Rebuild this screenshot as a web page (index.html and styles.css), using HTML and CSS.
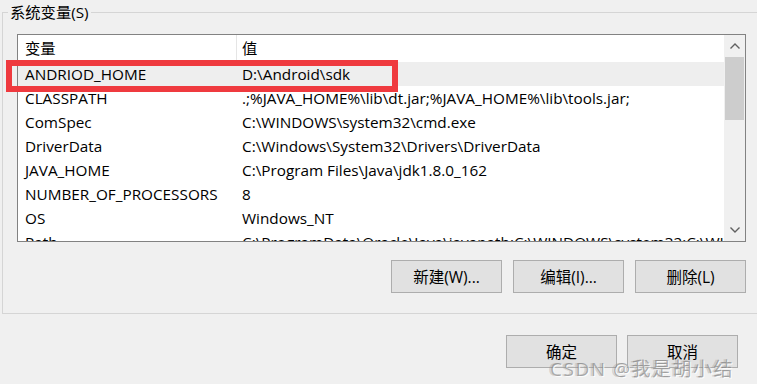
FILE: index.html
```html
<!DOCTYPE html>
<html>
<head>
    <title>环境变量</title>
    <link rel="stylesheet" href="styles.css">
</head>
<body>
    <div class="group">
        <div class="group-title">系统变量(S)</div>
        <div class="listbox">
            <div class="list">
                <div class="list-head">
                    <div class="col-name">变量</div>
                    <div class="col-value">值</div>
                </div>
                <div class="row selected"><div class="col-name">ANDRIOD_HOME</div><div class="col-value">D:\Android\sdk</div></div>
                <div class="row"><div class="col-name">CLASSPATH</div><div class="col-value">.;%JAVA_HOME%\lib\dt.jar;%JAVA_HOME%\lib\tools.jar;</div></div>
                <div class="row"><div class="col-name">ComSpec</div><div class="col-value">C:\WINDOWS\system32\cmd.exe</div></div>
                <div class="row"><div class="col-name">DriverData</div><div class="col-value">C:\Windows\System32\Drivers\DriverData</div></div>
                <div class="row"><div class="col-name">JAVA_HOME</div><div class="col-value">C:\Program Files\Java\jdk1.8.0_162</div></div>
                <div class="row"><div class="col-name">NUMBER_OF_PROCESSORS</div><div class="col-value">8</div></div>
                <div class="row"><div class="col-name">OS</div><div class="col-value">Windows_NT</div></div>
                <div class="row"><div class="col-name">Path</div><div class="col-value">C:\ProgramData\Oracle\Java\javapath;C:\WINDOWS\system32;C:\WINDOWS;</div></div>
            </div>
            <div class="scrollbar">
                <div class="arrow">
                    <svg width="10" height="6" viewBox="0 0 10 6"><path d="M0.5 5.5 L5 1 L9.5 5.5" fill="none" stroke="#606060" stroke-width="1.4"/></svg>
                </div>
                <div class="track"><div class="thumb"></div></div>
                <div class="arrow">
                    <svg width="10" height="6" viewBox="0 0 10 6"><path d="M0.5 0.5 L5 5 L9.5 0.5" fill="none" stroke="#606060" stroke-width="1.4"/></svg>
                </div>
            </div>
        </div>
        <div class="actions">
            <button>新建(W)...</button>
            <button>编辑(I)...</button>
            <button>删除(L)</button>
        </div>
    </div>

    <div class="footer">
        <button>确定</button>
        <button>取消</button>
    </div>

    <div class="mark"></div>
    <div class="watermark">CSDN @我是胡小结</div>
</body>
</html>
```

FILE: styles.css
```css
body {
    margin: 0;
    width: 757px;
    height: 384px;
    overflow: hidden;
    position: relative;
    background: #f0f0f0;
    color: #000;
    font-family: "Open Sans", "Noto Sans CJK SC", sans-serif;
    font-size: 15.3px;
}
.group {
    box-sizing: border-box;
    height: 302px;
    margin: 12px 0 0 2px;
    padding: 0 11px 0 14px;
    border: 1px solid #d5d5d5;
    border-right: none;
}
.group-title {
    width: fit-content;
    margin: -11px 0 0 -9px;
    padding: 0 2px;
    line-height: 21px;
    background: #f0f0f0;
}
.listbox {
    box-sizing: border-box;
    display: flex;
    height: 208px;
    margin-top: 11px;
    border: 1px solid #828282;
    background: #fff;
}
.list {
    flex: 1;
    overflow: hidden;
    white-space: nowrap;
}
.list-head, .row {
    display: flex;
}
.list-head {
    height: 27px;
    line-height: 27px;
}
.list-head .col-value {
    border-left: 1px solid #e5e5e5;
}
.row {
    height: 24px;
    line-height: 24px;
}
.row .col-value {
    border-left: 1px solid transparent;
}
.selected {
    background: #eeeeee;
}
.col-name {
    width: 211px;
    flex-shrink: 0;
    padding-left: 7px;
}
.col-value {
    padding-left: 5px;
}
.scrollbar {
    width: 21px;
    display: flex;
    flex-direction: column;
    background: #f0f0f0;
}
.arrow {
    height: 22px;
    display: flex;
    align-items: center;
    justify-content: center;
}
.track {
    flex: 1;
}
.thumb {
    height: 63px;
    margin: 0 1px;
    background: #cdcdcd;
}
.actions, .footer {
    display: flex;
    justify-content: flex-end;
}
.actions {
    gap: 11px;
    margin-top: 18px;
}
.footer {
    gap: 10px;
    margin-top: 21px;
    padding-right: 19px;
}
button {
    box-sizing: border-box;
    width: 111px;
    height: 33px;
    padding: 0;
    border: 1px solid #adadad;
    background: #e1e1e1;
    color: #000;
    font-family: "Open Sans", "Noto Sans CJK SC", sans-serif;
    font-size: 15.5px;
}
.mark {
    position: absolute;
    left: 6px;
    top: 60px;
    width: 392px;
    height: 32px;
    box-sizing: border-box;
    border: 6px solid #ef3a3f;
}
.watermark {
    position: absolute;
    left: 550px;
    top: 354px;
    font-size: 19px;
    letter-spacing: 1.5px;
    color: rgba(120, 120, 120, 0.6);
    text-shadow: 1px 1px 0 rgba(255, 255, 255, 0.85), -2px 0 0 rgba(150, 150, 150, 0.35);
}
```
